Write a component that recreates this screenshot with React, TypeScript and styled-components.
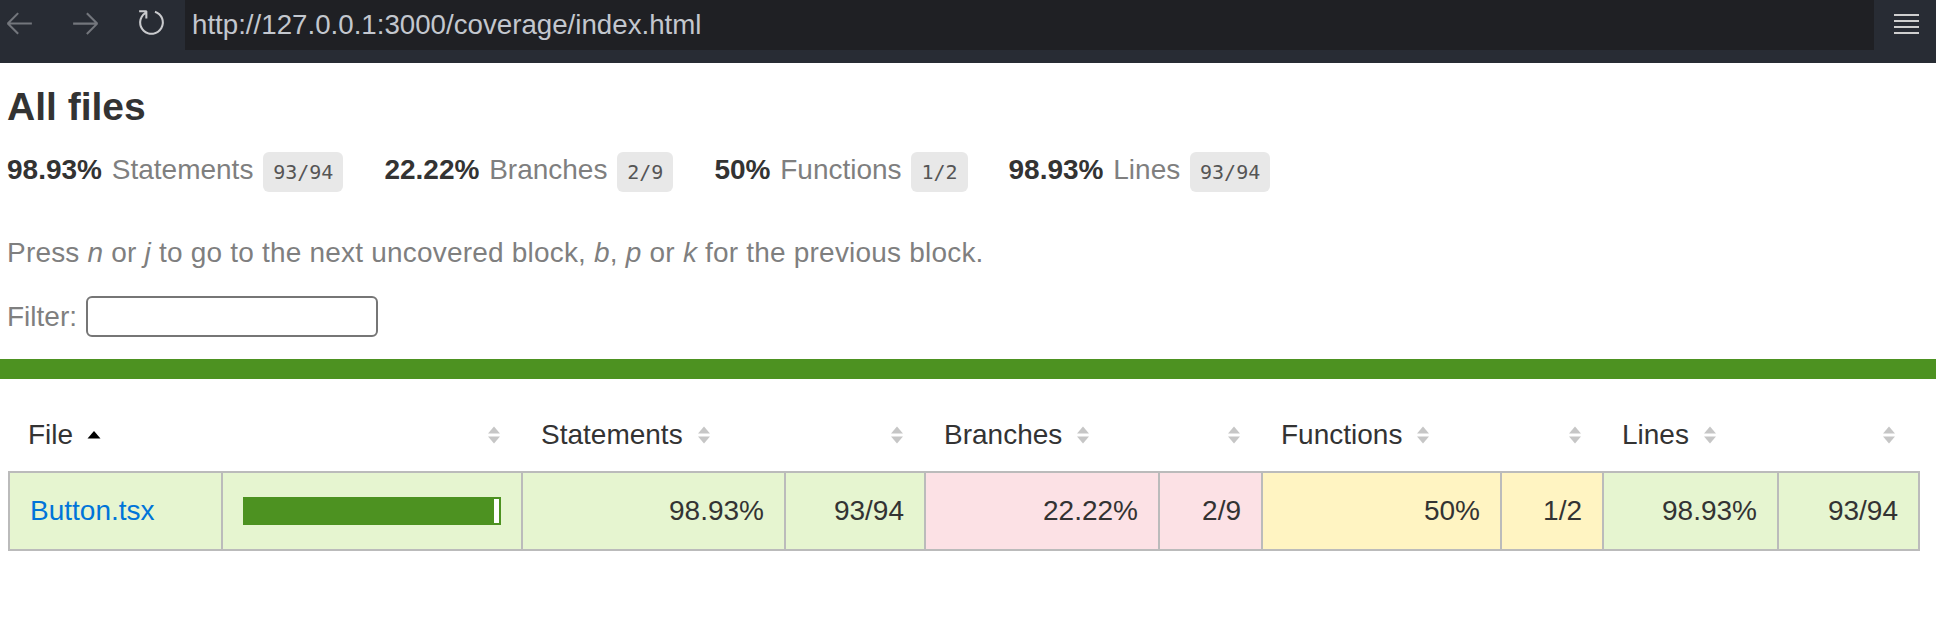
import React from "react";
import styled, { createGlobalStyle } from "styled-components";

const GlobalStyle = createGlobalStyle`
  * { box-sizing: border-box; }
  html, body { margin: 0; padding: 0; background: #ffffff; }
  body {
    font-family: "Liberation Sans", Arial, Helvetica, sans-serif;
    font-size: 28px;
    color: #333333;
  }
`;

/* ---------- browser chrome ---------- */

const BrowserBar = styled.header`
  display: flex;
  height: 63px;
  background: #282c34;
`;

const NavGroup = styled.nav`
  flex: none;
  width: 185px;
  display: flex;
  align-items: flex-start;
  gap: 33px;
  padding: 6px 0 0 2.5px;
`;

const NavButton = styled.span<{ $bright?: boolean }>`
  display: block;
  width: 33px;
  height: 33px;
  color: ${(p) => (p.$bright ? "#c9cacd" : "#73767c")};
  svg {
    display: block;
    width: 33px;
    height: 33px;
  }
`;

const UrlField = styled.div`
  flex: 1;
  height: 50px;
  display: flex;
  align-items: center;
  padding-left: 7px;
  background: #1f2024;
  color: #c3c7ce;
  font-size: 27.7px;
  line-height: 32px;
  white-space: nowrap;
`;

const MenuButton = styled.div`
  flex: none;
  width: 62px;
  padding: 14px 0 0 20px;
  svg {
    display: block;
  }
`;

/* ---------- summary ---------- */

const Summary = styled.section`
  padding-left: 7px;
`;

const Title = styled.h1`
  margin: 0;
  padding-top: 21px;
  font-size: 39px;
  line-height: 46px;
  font-weight: bold;
  color: #333333;
`;

const StatsRow = styled.div`
  display: flex;
  gap: 41px;
  margin-top: 22px;
  line-height: 32px;
`;

const Stat = styled.div`
  white-space: nowrap;
  word-spacing: 2px;
`;

const Strong = styled.span`
  font-weight: bold;
`;

const Quiet = styled.span`
  color: #7f7f7f;
`;

const Fraction = styled.span`
  display: inline-block;
  padding: 8px 10px;
  border-radius: 6px;
  background: #e8e8e8;
  color: #555555;
  font-family: "DejaVu Sans Mono", Menlo, "Liberation Mono", monospace;
  font-size: 20px;
  line-height: 24px;
  word-spacing: 0;
`;

const Hint = styled.p`
  margin: 45px 0 0;
  color: #7f7f7f;
  line-height: 32px;
  letter-spacing: 0.2px;
  white-space: nowrap;
`;

const FilterRow = styled.div`
  display: flex;
  align-items: center;
  gap: 9px;
  margin-top: 27px;
  color: #7f7f7f;
  line-height: 32px;
`;

const FilterInput = styled.input`
  appearance: none;
  width: 292px;
  height: 41px;
  margin: 0;
  padding: 0 8px;
  border: 2px solid #767676;
  border-radius: 6px;
  background: #ffffff;
  font: inherit;
  color: #333333;
  outline: none;
`;

/* ---------- table ---------- */

type Level = "high" | "medium" | "low";

const cellColors: Record<Level, string> = {
  high: "#e6f5d0",
  medium: "#fff4c2",
  low: "#fce1e5",
};

const lineColors: Record<Level, string> = {
  high: "#4d9221",
  medium: "#f9cd0b",
  low: "#c21f39",
};

const StatusLine = styled.div<{ $level: Level }>`
  height: 20px;
  margin-top: 22px;
  background: ${(p) => lineColors[p.$level]};
`;

const COLUMNS = "213px 300px 263px 140px 234px 103px 239px 102px 175px 139px";

const TableSection = styled.section`
  padding: 20px 16px 0 8px;
`;

const HeaderRow = styled.div`
  display: grid;
  grid-template-columns: ${COLUMNS};
`;

const HeaderCell = styled.div<{ $right?: boolean }>`
  display: flex;
  align-items: center;
  justify-content: ${(p) => (p.$right ? "flex-end" : "flex-start")};
  padding: 20px;
  line-height: 32px;
  white-space: nowrap;
  color: #333333;
`;

const SortGlyph = styled.svg<{ $spaced?: boolean }>`
  flex: none;
  width: 14px;
  height: 20px;
  margin-left: ${(p) => (p.$spaced ? "14px" : "0")};
`;

const DataRow = styled.div`
  display: grid;
  grid-template-columns: ${COLUMNS};
  border: 2px solid #bbbbbb;
`;

const DataCell = styled.div<{ $level: Level; $right?: boolean }>`
  display: flex;
  align-items: center;
  justify-content: ${(p) => (p.$right ? "flex-end" : "flex-start")};
  padding: 22px 20px;
  line-height: 32px;
  white-space: nowrap;
  background: ${(p) => cellColors[p.$level]};
  border-right: 2px solid #bbbbbb;
  &:last-child {
    border-right: none;
  }
`;

const FileLink = styled.a`
  color: #0074d9;
  text-decoration: none;
`;

const Chart = styled.div<{ $level: Level }>`
  display: flex;
  width: 100%;
  height: 28px;
  border: 2px solid ${(p) => lineColors[p.$level]};
`;

const ChartFill = styled.div<{ $level: Level }>`
  height: 100%;
  background: ${(p) => lineColors[p.$level]};
`;

const ChartEmpty = styled.div`
  height: 100%;
  background: #ffffff;
`;

/* ---------- icons ---------- */

const ArrowLeft = () => (
  <svg viewBox="0 0 16 16" fill="currentColor">
    <path d="M7 3.093l-5 5V8.8l5 5 .707-.707-4.146-4.147H14v-1H3.56L7.708 3.8 7 3.093z" />
  </svg>
);

const ArrowRight = () => (
  <svg viewBox="0 0 16 16" fill="currentColor">
    <path d="M9 13.887l5-5V8.18l-5-5-.707.707 4.146 4.147H2v1h10.44L8.293 13.18l.707.707z" />
  </svg>
);

const Refresh = () => (
  <svg viewBox="0 0 16 16" fill="currentColor">
    <path d="M4.681 3H2V2h3.5l.5.5V6H5V4a5 5 0 1 0 4.53-.761l.302-.954A6 6 0 1 1 4.681 3z" />
  </svg>
);

const Hamburger = () => (
  <svg width="25" height="20" viewBox="0 0 25 20" fill="#cfcfcf">
    <rect x="0" y="0" width="25" height="2" />
    <rect x="0" y="6" width="25" height="2" />
    <rect x="0" y="12" width="25" height="2" />
    <rect x="0" y="18" width="25" height="2" />
  </svg>
);

const Sorter = ({ sorted, spaced }: { sorted?: boolean; spaced?: boolean }) => (
  <SortGlyph $spaced={spaced} viewBox="0 0 14 20">
    {sorted ? (
      <path d="M7 6 L13.5 13.5 H0.5 Z" fill="#000000" />
    ) : (
      <>
        <path d="M7 1.5 L13 8.5 H1 Z" fill="#c6c6c6" />
        <path d="M1 11.5 H13 L7 18.5 Z" fill="#c6c6c6" />
      </>
    )}
  </SortGlyph>
);

/* ---------- data ---------- */

type Metric = { label: string; pct: string; covered: number; total: number; level: Level };

const metrics: Metric[] = [
  { label: "Statements", pct: "98.93%", covered: 93, total: 94, level: "high" },
  { label: "Branches", pct: "22.22%", covered: 2, total: 9, level: "low" },
  { label: "Functions", pct: "50%", covered: 1, total: 2, level: "medium" },
  { label: "Lines", pct: "98.93%", covered: 93, total: 94, level: "high" },
];

const files = [
  {
    name: "Button.tsx",
    level: "high" as Level,
    fill: 98,
    metrics,
  },
];

export default function App() {
  return (
    <>
      <GlobalStyle />
      <BrowserBar>
        <NavGroup>
          <NavButton>
            <ArrowLeft />
          </NavButton>
          <NavButton>
            <ArrowRight />
          </NavButton>
          <NavButton $bright>
            <Refresh />
          </NavButton>
        </NavGroup>
        <UrlField>http://127.0.0.1:3000/coverage/index.html</UrlField>
        <MenuButton>
          <Hamburger />
        </MenuButton>
      </BrowserBar>

      <Summary>
        <Title>All files</Title>
        <StatsRow>
          {metrics.map((m) => (
            <Stat key={m.label}>
              <Strong>{m.pct}</Strong> <Quiet>{m.label}</Quiet>{" "}
              <Fraction>
                {m.covered}/{m.total}
              </Fraction>
            </Stat>
          ))}
        </StatsRow>
        <Hint>
          Press <em>n</em> or <em>j</em> to go to the next uncovered block, <em>b</em>,{" "}
          <em>p</em> or <em>k</em> for the previous block.
        </Hint>
        <FilterRow>
          <span>Filter:</span>
          <FilterInput type="search" aria-label="Filter" />
        </FilterRow>
      </Summary>

      <StatusLine $level="high" />

      <TableSection>
        <HeaderRow>
          <HeaderCell>
            File
            <Sorter sorted spaced />
          </HeaderCell>
          <HeaderCell $right>
            <Sorter />
          </HeaderCell>
          {metrics.map((m) => (
            <React.Fragment key={m.label}>
              <HeaderCell>
                {m.label}
                <Sorter spaced />
              </HeaderCell>
              <HeaderCell $right>
                <Sorter />
              </HeaderCell>
            </React.Fragment>
          ))}
        </HeaderRow>
        {files.map((f) => (
          <DataRow key={f.name}>
            <DataCell $level={f.level}>
              <FileLink href="#">{f.name}</FileLink>
            </DataCell>
            <DataCell $level={f.level}>
              <Chart $level={f.level}>
                <ChartFill $level={f.level} style={{ width: `${f.fill}%` }} />
                <ChartEmpty style={{ width: `${100 - f.fill}%` }} />
              </Chart>
            </DataCell>
            {f.metrics.map((m) => (
              <React.Fragment key={m.label}>
                <DataCell $level={m.level} $right>
                  {m.pct}
                </DataCell>
                <DataCell $level={m.level} $right>
                  {m.covered}/{m.total}
                </DataCell>
              </React.Fragment>
            ))}
          </DataRow>
        ))}
      </TableSection>
    </>
  );
}
